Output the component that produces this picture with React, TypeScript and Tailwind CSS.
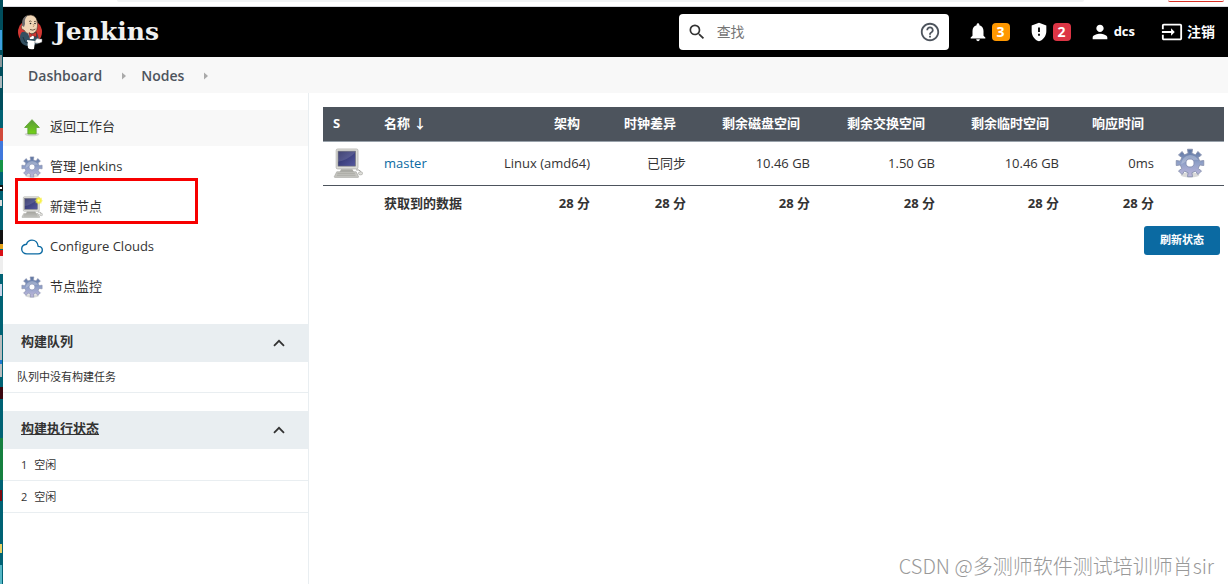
import React from "react";
import {
  MdGppMaybe,
  MdHelpOutline,
  MdInput,
  MdNotifications,
  MdPerson,
  MdSearch,
} from "react-icons/md";
import { IoCloudOutline } from "react-icons/io5";

interface IconProps {
  className?: string;
}

const GearIcon: React.FC<IconProps> = ({ className }) => (
  <svg viewBox="0 0 48 48" className={className} aria-hidden="true">
    <defs>
      <linearGradient id="gearFill" x1="0" y1="0" x2="0" y2="48" gradientUnits="userSpaceOnUse">
        <stop offset="0" stopColor="#566f9c" />
        <stop offset="0.5" stopColor="#8fa0c8" />
        <stop offset="1" stopColor="#c3b8dc" />
      </linearGradient>
    </defs>
    <ellipse cx="24" cy="43" rx="15" ry="4" fill="#000" opacity="0.15" />
    <path
      d="M21 8.500 L20 2 H28 L27 8.500 L32.800 10.900 L36.700 5.600 L42.400 11.300 L37.100 15.200 L39.500 21 L46 20 V28 L39.500 27 L37.100 32.800 L42.400 36.700 L36.700 42.400 L32.800 37.100 L27 39.500 L28 46 H20 L21 39.500 L15.200 37.100 L11.300 42.400 L5.600 36.700 L10.900 32.800 L8.500 27 L2 28 V20 L8.500 21 L10.900 15.200 L5.600 11.300 L11.300 5.600 L15.200 10.900 Z"
      fill="url(#gearFill)"
      stroke="#8a93b0"
      strokeWidth="1.500"
      strokeLinejoin="round"
    />
    <path d="M10 26 Q11 13 24 11 Q34 12 37 19 Q22 18 10 26 Z" fill="#fff" opacity="0.25" />
    <circle cx="24" cy="24" r="6.500" fill="#fff" stroke="#8590b3" strokeWidth="1.500" />
  </svg>
);

const ComputerIcon: React.FC<IconProps & { isNew?: boolean }> = ({ className, isNew }) => (
  <svg viewBox="0 0 48 48" className={className} aria-hidden="true">
    <defs>
      <linearGradient id="screenFill" x1="0" y1="0" x2="1" y2="1">
        <stop offset="0" stopColor="#26295f" />
        <stop offset="0.5" stopColor="#3e4280" />
        <stop offset="1" stopColor="#5558a0" />
      </linearGradient>
      <radialGradient id="starFill">
        <stop offset="0" stopColor="#fffde0" />
        <stop offset="0.4" stopColor="#f7f13c" />
        <stop offset="1" stopColor="#f4e92a" stopOpacity="0.300" />
      </radialGradient>
    </defs>
    <path d="M13 34 H31 L34 39 H10 Z" fill="#a9a9a3" />
    <rect x="5" y="1.500" width="35" height="32" rx="2.500" fill="#dededa" stroke="#a3a39e" />
    <rect x="8" y="5" width="28" height="24" fill="url(#screenFill)" stroke="#777" />
    <path d="M8 22 Q22 20 35 8 V5 H8 Z" fill="#fff" opacity="0.13" />
    <path d="M6 38 H37 L41 46 Q41 47 40 47 H3 Q2 47 2 46 Z" fill="#c6c6c1" stroke="#a3a39e" />
    <path d="M7 40.500 H35 M6 43.500 H36" stroke="#a8a8a3" strokeWidth="1.500" />
    <path d="M37 35 Q42 34 45 38" fill="none" stroke="#9a9a94" strokeWidth="1.500" />
    <ellipse cx="44" cy="40.500" rx="3.500" ry="2.500" fill="#dededa" stroke="#a3a39e" />
    {isNew && (
      <path
        d="M39 1 L41.500 4 L46 3.500 L45.500 8 L48 10.500 L45 13 L45 17 L41 16.500 L38 19 L35.500 16 L31.500 16 L32 12 L29.500 9 L33 7 L33.500 3 L37 3.500 Z"
        fill="url(#starFill)"
      />
    )}
  </svg>
);

const UpArrowIcon: React.FC<IconProps> = ({ className }) => (
  <svg viewBox="0 0 24 24" className={className} aria-hidden="true">
    <defs>
      <linearGradient id="arrowFill" x1="0" y1="0" x2="0" y2="1">
        <stop offset="0" stopColor="#5a9a3c" />
        <stop offset="1" stopColor="#73d216" />
      </linearGradient>
    </defs>
    <ellipse cx="12" cy="20" rx="8" ry="2" fill="#000" opacity="0.15" />
    <path
      d="M12 4 L20 12.500 H16.500 V19.500 H7.500 V12.500 H4 Z"
      fill="url(#arrowFill)"
      stroke="#63a53a"
      strokeLinejoin="round"
    />
  </svg>
);

const JenkinsLogo: React.FC<IconProps> = ({ className }) => (
  <svg viewBox="0 0 26 36" className={className} aria-hidden="true">
    <circle cx="13" cy="18" r="12" fill="#d33833" />
    <path d="M5 18 Q2 21 3.500 27 Q5 31 10 32 L21 30 Q23 25 20 19 L15 17 Z" fill="#335061" />
    <path
      d="M6 11 Q3.500 11 4.500 14 Q5 16 7 16 Q9 20 13 20 Q20 20 20.500 12 Q21 2 14 1 Q6 1 6 8 Z"
      fill="#f0d6b7"
      stroke="#4a3a2c"
      strokeWidth="0.600"
    />
    <path d="M5.500 12 Q4 7 7 3.500 Q9 1.500 11 1.500 Q7 4 8 10 L7 13 Z" fill="#6d6b6d" />
    <path
      d="M12 7.500 Q13.500 6.500 14.500 7.500 M17 7.500 Q18.500 7 19.500 8 M13 15.500 Q16 17 18.500 15"
      fill="none"
      stroke="#4a3a2c"
      strokeWidth="0.800"
    />
    <circle cx="13.500" cy="9.500" r="0.800" fill="#222" />
    <circle cx="18" cy="9.500" r="0.800" fill="#222" />
    <path d="M16 10 Q18 12 16 13" fill="none" stroke="#c49a76" />
    <path d="M11 19 L14 21 L18 19 L16.500 25 L13 25 Z" fill="#fff" />
    <path
      d="M12 18.500 L15 20.500 L19.500 18 V23 L15.500 21.500 L12.500 23.500 Z"
      fill="#d33833"
      stroke="#5e1210"
      strokeWidth="0.500"
    />
    <path d="M10 26 L18 27 L17 35 Q13 36 11 34 Z" fill="#fff" />
    <path d="M18 27 Q20 23 22 25 L25 25 L25 28 Q22 30 18 29 Z" fill="#fff" stroke="#6d6b6d" strokeWidth="0.500" />
    <path d="M6 23 L8 28 L11 29" fill="none" stroke="#1d3440" />
  </svg>
);

// Sliver of the desktop visible beside the browser window
const DesktopEdge: React.FC = () => (
  <svg
    viewBox="0 0 3 584"
    preserveAspectRatio="none"
    className="w-[3px] shrink-0 self-stretch bg-[#006274]"
    aria-hidden="true"
  >
    <rect width="3" height="110" fill="#004d5c" />
    <rect y="30" width="2" height="20" fill="#3d9fe0" />
    <rect y="55" width="2" height="12" fill="#8b989c" />
    <rect y="76" width="2" height="12" fill="#aab8bd" />
    <rect y="128" width="3" height="13" fill="#d14a3c" />
    <rect y="141" width="3" height="19" fill="#3f78dc" />
    <rect y="160" width="3" height="12" fill="#159447" />
    <rect y="185" width="3" height="6" fill="#111" />
    <rect y="187" width="2" height="2" fill="#fff" />
    <rect y="200" width="2" height="6" fill="#ddd" />
    <rect y="230" width="3" height="14" fill="#111" />
    <rect y="244" width="3" height="5" fill="#e5a21b" />
    <rect y="250" width="3" height="6" fill="#d80f16" />
    <rect y="256" width="3" height="18" fill="#eee" />
    <rect y="284" width="2" height="12" fill="#c9d3e8" />
    <rect y="335" width="2" height="42" fill="#b9bcbe" />
    <rect y="360" width="2" height="4" fill="#1f78d1" />
    <rect y="387" width="3" height="12" fill="#3b0810" />
    <rect y="438" width="3" height="42" fill="#15803f" />
    <rect y="490" width="2" height="11" fill="#7c0b12" />
    <rect y="544" width="2" height="9" fill="#e7cf63" />
    <rect y="565" width="2" height="19" fill="#55b7c6" />
  </svg>
);

const Header: React.FC = () => (
  <header className="flex h-[50px] items-center bg-black pl-3.5 pr-[13px] text-white">
    <a href="#" className="flex items-center gap-[11px]">
      <JenkinsLogo className="h-9 w-[26px]" />
      <span className="font-['DejaVu_Serif',serif] text-[25px] font-bold text-[#f0f0f0]">Jenkins</span>
    </a>
    <form className="ml-auto flex h-9 w-[270px] items-center rounded bg-white px-2">
      <MdSearch className="size-5 shrink-0 text-[#333]" />
      <input
        type="text"
        aria-label="查找"
        placeholder="查找"
        className="ml-2.5 min-w-0 flex-1 text-sm text-[#333] outline-none placeholder:text-[#757575]"
      />
      <a href="#" aria-label="Help">
        <MdHelpOutline className="size-[22px] text-[#4d545d]" />
      </a>
    </form>
    <nav className="ml-[18px] flex items-center text-[13px] font-bold">
      <button type="button" className="flex items-center gap-[3px]">
        <MdNotifications className="size-[22px]" />
        <span className="flex size-[18px] items-center justify-center rounded bg-[#ff9800] text-sm">3</span>
      </button>
      <button type="button" className="ml-[18px] flex items-center gap-[3px]">
        <MdGppMaybe className="size-[22px]" />
        <span className="flex size-[18px] items-center justify-center rounded bg-[#dc3545] text-sm">2</span>
      </button>
      <a href="#" className="ml-[18px] flex items-center gap-[3px]">
        <MdPerson className="size-[22px]" />
        dcs
      </a>
      <a href="#" className="ml-[26px] flex items-center gap-1 text-sm">
        <MdInput className="size-[22px]" />
        注销
      </a>
    </nav>
  </header>
);

const Crumb: React.FC<{ label: string }> = ({ label }) => (
  <li className="flex items-center">
    <a href="#">{label}</a>
    <svg viewBox="0 0 4 8" className="ml-5 mr-[15px] h-2 w-1" aria-hidden="true">
      <path d="M0 0.500 L4 4 L0 7.500 Z" fill="#aaa" />
    </svg>
  </li>
);

const iconClass = "size-[22px] shrink-0";

const tasks = [
  { label: "返回工作台", icon: <UpArrowIcon className={iconClass} />, active: true },
  { label: "管理 Jenkins", icon: <GearIcon className={iconClass} /> },
  { label: "新建节点", icon: <ComputerIcon className={iconClass} isNew />, marked: true },
  {
    label: "Configure Clouds",
    icon: <IoCloudOutline className="size-[22px] shrink-0 stroke-[#0b6aa2] text-[#0b6aa2]" />,
  },
  { label: "节点监控", icon: <GearIcon className={iconClass} /> },
];

const PaneHeader: React.FC<{ title: string; linked?: boolean }> = ({ title, linked }) => (
  <div className="flex h-[38px] items-center justify-between bg-[#e9eef1] pl-[18px] pr-[23px]">
    <h2 className="pb-0.5 font-bold">
      {linked ? (
        <a href="#" className="underline">
          {title}
        </a>
      ) : (
        title
      )}
    </h2>
    <button type="button" aria-label={title}>
      <svg viewBox="0 0 12 12" className="size-3" fill="none" stroke="#333" strokeWidth="1.800">
        <path d="M1 8.800 L6 3.800 L11 8.800" />
      </svg>
    </button>
  </div>
);

const executors = [
  { id: 1, status: "空闲" },
  { id: 2, status: "空闲" },
];

const SidePanel: React.FC = () => (
  <aside className="w-[306px] shrink-0 border-r border-[#e9eef1] pt-[17px]">
    <ul className="flex flex-col gap-1">
      {tasks.map((task) => (
        <li key={task.label} className={task.active ? "relative bg-[#f8f8f8]" : "relative"}>
          <a href="#" className="flex h-9 items-center gap-[7px] pl-[18px] pb-0.5">
            {task.icon}
            {task.label}
          </a>
          {task.marked && (
            <span className="pointer-events-none absolute -top-3 left-3 h-[46px] w-[183px] border-3 border-[#f70000]" />
          )}
        </li>
      ))}
    </ul>
    <section className="mt-[18px]">
      <PaneHeader title="构建队列" />
      <p className="flex h-[31px] items-center border-b border-[#e9eef1] pl-3.5 text-[11px]">
        队列中没有构建任务
      </p>
    </section>
    <section className="mt-[18px]">
      <PaneHeader title="构建执行状态" linked />
      <ul className="text-[11px]">
        {executors.map((executor) => (
          <li
            key={executor.id}
            className="flex h-8 items-center gap-[7px] border-b border-[#e9eef1] pl-[18px] pt-0.5"
          >
            <span>{executor.id}</span>
            <span>{executor.status}</span>
          </li>
        ))}
      </ul>
    </section>
  </aside>
);

const columns = [
  { title: "架构", value: "Linux (amd64)", width: "w-[98px]" },
  { title: "时钟差异", value: "已同步", width: "w-24" },
  { title: "剩余磁盘空间", value: "10.46 GB", width: "w-[124px]" },
  { title: "剩余交换空间", value: "1.50 GB", width: "w-[125px]" },
  { title: "剩余临时空间", value: "10.46 GB", width: "w-[124px]" },
  { title: "响应时间", value: "0ms", width: "w-[95px]" },
];

const NodesTable: React.FC = () => (
  <table className="w-full table-fixed border-collapse">
    <thead>
      <tr className="h-[34px] border-b border-[#98a1aa] bg-[#4d545d] text-white">
        <th className="w-[51px] pl-2.5 text-left">S</th>
        <th className="pl-2.5 text-left">名称 ↓</th>
        {columns.map((column) => (
          <th key={column.title} className={`${column.width} whitespace-nowrap pr-5 text-right`}>
            {column.title}
          </th>
        ))}
        <th className="w-[60px]" />
      </tr>
    </thead>
    <tbody>
      <tr className="h-11 border-b border-[#4d545d]">
        <td className="pl-2.5">
          <ComputerIcon className="size-[30px]" />
        </td>
        <td className="pl-2.5 pt-0.5">
          <a href="#" className="text-[#0b6aa2]">
            master
          </a>
        </td>
        {columns.map((column) => (
          <td key={column.title} className="whitespace-nowrap pr-2.5 pt-0.5 text-right">
            {column.value}
          </td>
        ))}
        <td>
          <a href="#" aria-label="配置" className="flex justify-center pr-2">
            <GearIcon className="size-[30px]" />
          </a>
        </td>
      </tr>
      <tr className="h-9 font-bold">
        <td />
        <td className="pl-2.5">获取到的数据</td>
        {columns.map((column) => (
          <td key={column.title} className="pr-2.5 text-right">
            28 分
          </td>
        ))}
        <td />
      </tr>
    </tbody>
  </table>
);

const App: React.FC = () => {
  return (
    <div className="relative flex min-h-screen bg-white font-['Open_Sans','Noto_Sans_CJK_SC',sans-serif] text-[13px] text-[#333]">
      <DesktopEdge />
      <div className="flex min-w-0 flex-1 flex-col">
        <div className="flex h-[7px] items-start border-b border-[#dadce0] pl-[114px] pr-1">
          <div className="mr-[84px] h-0.5 flex-1 rounded-b-sm bg-[#f1f3f4]" />
          <div className="h-0.5 w-14 rounded-b-full border-b border-[#d93025]" />
        </div>
        <Header />
        <ol className="flex h-9 items-center bg-[#f8f8f8] pl-[25px] pt-0.5 text-sm font-semibold text-[#4d545d]">
          <Crumb label="Dashboard" />
          <Crumb label="Nodes" />
        </ol>
        <div className="flex flex-1">
          <SidePanel />
          <main className="min-w-0 flex-1 pl-3.5 pr-1 pt-3.5">
            <NodesTable />
            <div className="mt-[5px] flex justify-end pr-1">
              <button
                type="button"
                className="h-[29px] rounded-[3px] bg-[#0b6aa2] px-4 text-[11px] font-bold text-white"
              >
                刷新状态
              </button>
            </div>
          </main>
        </div>
      </div>
      <p className="pointer-events-none absolute bottom-1 right-3.5 font-['Noto_Sans_CJK_SC',sans-serif] text-xl font-light text-[#999]">
        CSDN @多测师软件测试培训师肖sir
      </p>
    </div>
  );
};

export default App;
